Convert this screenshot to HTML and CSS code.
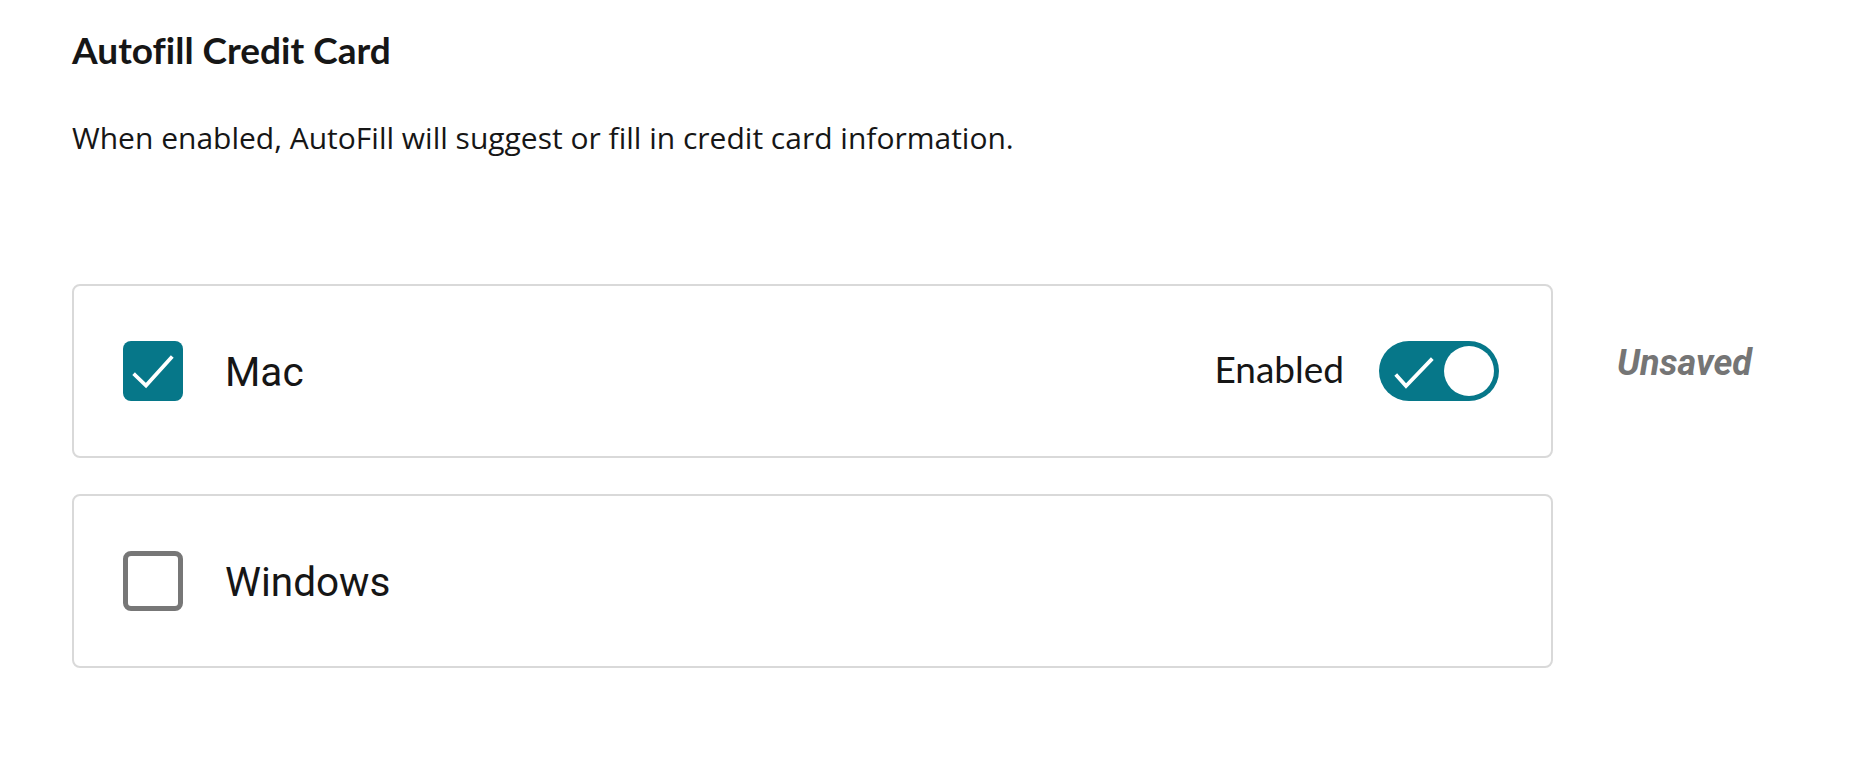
FILE: index.html
```html
<!DOCTYPE html>
<html lang="en">
<head>
<meta charset="utf-8">
<title>Autofill Credit Card</title>
<link rel="stylesheet" href="styles.css">
</head>
<body>
<main class="page">
  <h2 class="title">Autofill Credit Card</h2>
  <p class="desc">When enabled, AutoFill will suggest or fill in credit card information.</p>
  <div class="list">
    <div class="row">
      <div class="card">
        <span class="checkbox checked">
          <svg width="60" height="60" viewBox="0 0 60 60"><path d="M12 34 L23 44.5 L48 17" fill="none" stroke="#fff" stroke-width="3.8" stroke-linecap="square"/></svg>
        </span>
        <span class="name">Mac</span>
        <span class="spacer"></span>
        <span class="state">Enabled</span>
        <span class="toggle on">
          <svg class="toggle-check" width="60" height="60" viewBox="0 0 60 60"><path d="M18 35 L27 45 L52 19" fill="none" stroke="#fff" stroke-width="3.8" stroke-linecap="square"/></svg>
          <span class="knob"></span>
        </span>
      </div>
      <span class="status">Unsaved</span>
    </div>
    <div class="row">
      <div class="card">
        <span class="checkbox"></span>
        <span class="name">Windows</span>
      </div>
    </div>
  </div>
</main>
</body>
</html>
```
FILE: styles.css
```css
html, body {
  margin: 0;
  padding: 0;
  background: #ffffff;
}
.page {
  padding: 28px 0 0 72px;
  font-family: Lato, "Liberation Sans", sans-serif;
  font-variant-ligatures: none;
  color: #161616;
}
.title {
  margin: 0;
  font-size: 37px;
  line-height: 44px;
  font-weight: 700;
}
.desc {
  margin: 48px 0 0 0;
  font-family: "Open Sans", "Liberation Sans", sans-serif;
  font-size: 30px;
  line-height: 36px;
  font-weight: 400;
}
.list {
  margin-top: 128px;
  display: flex;
  flex-direction: column;
  gap: 36px;
}
.row {
  display: flex;
  align-items: center;
}
.card {
  box-sizing: border-box;
  width: 1481px;
  height: 174px;
  border: 2px solid #d9d9d9;
  border-radius: 8px;
  display: flex;
  align-items: center;
  padding: 0 52px 0 49px;
}
.checkbox {
  box-sizing: border-box;
  width: 60px;
  height: 60px;
  border-radius: 8px;
  border: 5px solid #777777;
  flex: none;
  display: block;
}
.checkbox.checked {
  border: none;
  background: #067789;
}
.checkbox svg {
  display: block;
}
.name {
  margin-left: 42px;
  margin-top: 2px;
  font-family: Roboto, "Liberation Sans", sans-serif;
  font-size: 40.5px;
  color: #161616;
}
.spacer {
  flex: 1;
}
.state {
  font-size: 37px;
  color: #161616;
  margin-right: 35px;
  margin-bottom: 6px;
}
.toggle {
  position: relative;
  width: 120px;
  height: 60px;
  border-radius: 30px;
  background: #067789;
  flex: none;
}
.toggle-check {
  position: absolute;
  left: 0;
  top: 0;
}
.knob {
  position: absolute;
  right: 5px;
  top: 5px;
  width: 50px;
  height: 50px;
  border-radius: 50%;
  background: #ffffff;
}
.status {
  margin-left: 64px;
  margin-bottom: 16px;
  font-family: Roboto, "Liberation Sans", sans-serif;
  font-size: 36px;
  font-weight: 700;
  font-style: italic;
  color: #757575;
}
```
